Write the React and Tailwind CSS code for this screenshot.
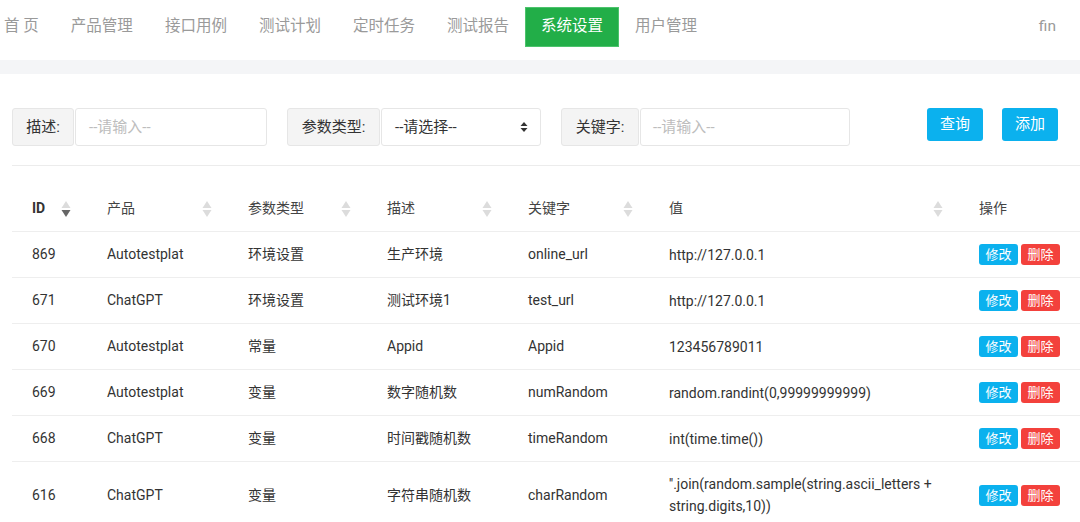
import { ChevronUp, ChevronDown } from 'lucide-react';

const NAV = ["首 页", "产品管理", "接口用例", "测试计划", "定时任务", "测试报告", "系统设置", "用户管理"];

const ROWS = [
  { id: 869, product: "Autotestplat", type: "环境设置", desc: "生产环境", key: "online_url", value: "http://127.0.0.1" },
  { id: 671, product: "ChatGPT", type: "环境设置", desc: "测试环境1", key: "test_url", value: "http://127.0.0.1" },
  { id: 670, product: "Autotestplat", type: "常量", desc: "Appid", key: "Appid", value: "123456789011" },
  { id: 669, product: "Autotestplat", type: "变量", desc: "数字随机数", key: "numRandom", value: "random.randint(0,99999999999)" },
  { id: 668, product: "ChatGPT", type: "变量", desc: "时间戳随机数", key: "timeRandom", value: "int(time.time())" },
  { id: 616, product: "ChatGPT", type: "变量", desc: "字符串随机数", key: "charRandom", value: "''.join(random.sample(string.ascii_letters + string.digits,10))" },
];

// 表头排序图标
const SortIcon = ({ active }) => (
  <svg width="10" height="18" viewBox="0 0 10 18" className="shrink-0">
    <path d="M5 1 L9.5 8 L0.5 8 Z" fill="#dcdcdc" />
    <path d="M5 17 L9.5 10 L0.5 10 Z" fill={active ? "#666" : "#dcdcdc"} />
  </svg>
);

const HEAD = [
  { label: "ID", w: "w-[75px]", bold: true, active: true },
  { label: "产品", w: "w-[141px]" },
  { label: "参数类型", w: "w-[139px]" },
  { label: "描述", w: "w-[141px]" },
  { label: "关键字", w: "w-[141px]" },
  { label: "值", w: "w-[310px]" },
];

const App = () => {
  return (
    <div className="w-[1080px] h-[522px] overflow-hidden bg-white text-[#333]" style={{ fontFamily: 'Roboto, "Noto Sans CJK SC", sans-serif' }}>
      {/* 顶部导航 */}
      <div className="h-[60px] flex items-start pt-[7px] relative">
        <div className="flex -ml-3">
          {NAV.map(n => (
            <div
              key={n}
              className={`h-[40px] flex items-center text-[15.5px] ${n === "系统设置" ? "px-[15px] bg-[#22ae48] text-white border border-[#4cc36c]" : "px-4 text-[#9a9a9a]"}`}
            >
              {n}
            </div>
          ))}
        </div>
        <div className="ml-auto mr-[24px] h-[40px] flex items-center text-[15.5px] text-[#9a9a9a]">fin</div>
      </div>
      <div className="h-[14px] bg-[#f4f5f7]" />

      <div className="pl-3">
        {/* 查询条件 */}
        <div className="pt-[34px] pb-[19px] border-b border-[#ececec] flex items-start">
          <div className="flex h-[38px]">
            <div className="w-[62px] bg-[#f4f4f4] border border-[#e6e6e6] rounded-[3px] flex items-center justify-center text-[15px]">描述:</div>
            <div className="w-[192px] ml-px border border-[#e6e6e6] rounded-[3px] flex items-center pl-[13px] text-[15px] text-[#bdbdbd]">--请输入--</div>
          </div>
          <div className="flex h-[38px] ml-[20px]">
            <div className="w-[93px] bg-[#f4f4f4] border border-[#e6e6e6] rounded-[3px] flex items-center justify-center text-[15px]">参数类型:</div>
            <div className="w-[160px] ml-px border border-[#e6e6e6] rounded-[3px] flex items-center pl-[13px] pr-[12px] text-[15px] text-[#333]">
              <span>--请选择--</span>
              <svg width="8" height="12" viewBox="0 0 8 12" className="ml-auto">
                <path d="M4 1 L7.5 5 L0.5 5 Z" fill="#333" />
                <path d="M4 11 L7.5 7 L0.5 7 Z" fill="#333" />
              </svg>
            </div>
          </div>
          <div className="flex h-[38px] ml-[20px]">
            <div className="w-[78px] bg-[#f4f4f4] border border-[#e6e6e6] rounded-[3px] flex items-center justify-center text-[15px]">关键字:</div>
            <div className="w-[210px] ml-px border border-[#e6e6e6] rounded-[3px] flex items-center pl-[12px] text-[15px] text-[#bdbdbd]">--请输入--</div>
          </div>
          <button className="ml-[77px] w-[56px] h-[33px] rounded-[3px] bg-[#0bb1ee] text-white text-[15px]">查询</button>
          <button className="ml-[19px] w-[56px] h-[33px] rounded-[3px] bg-[#0bb1ee] text-white text-[15px]">添加</button>
        </div>

        {/* 表格 */}
        <div className="mt-[20px] text-[14px]">
          <div className="flex h-[46px] border-b border-[#eeeeee]">
            {HEAD.map(h => (
              <div key={h.label} className={`${h.w} shrink-0 flex items-center pl-5 pr-[16px]`}>
                <span className={h.bold ? "font-bold text-[#333]" : "text-[#444]"}>{h.label}</span>
                <span className="ml-auto"><SortIcon active={h.active} /></span>
              </div>
            ))}
            <div className="flex-1 flex items-center pl-5 text-[#444]">操作</div>
          </div>
          {ROWS.map(r => (
            <div key={r.id} className={`flex border-b border-[#eeeeee] ${r.id === 616 ? "min-h-[66px] py-[11px]" : "h-[46px]"}`}>
              <div className="w-[75px] shrink-0 flex items-center pl-5">{r.id}</div>
              <div className="w-[141px] shrink-0 flex items-center pl-5">{r.product}</div>
              <div className="w-[139px] shrink-0 flex items-center pl-5">{r.type}</div>
              <div className="w-[141px] shrink-0 flex items-center pl-5">{r.desc}</div>
              <div className="w-[141px] shrink-0 flex items-center pl-5">{r.key}</div>
              <div className="w-[310px] shrink-0 flex items-center pl-5 pr-[24px] leading-[22px]">{r.value}</div>
              <div className="flex-1 flex items-center pl-5 gap-[3px]">
                <button className="w-[39px] h-[21px] rounded-[3px] bg-[#0bb1ee] text-white text-[13px] leading-none">修改</button>
                <button className="w-[39px] h-[21px] rounded-[3px] bg-[#f3413c] text-white text-[13px] leading-none">删除</button>
              </div>
            </div>
          ))}
        </div>
      </div>
    </div>
  );
};

export default App;
